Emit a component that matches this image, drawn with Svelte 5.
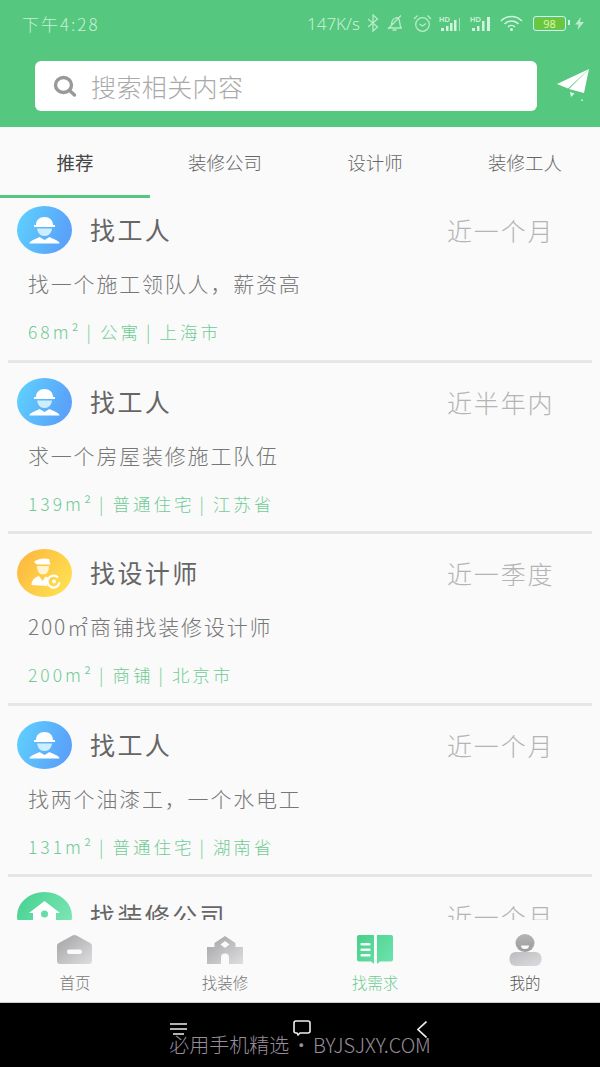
<script>
  const tabs = ['推荐', '装修公司', '设计师', '装修工人'];
  const items = [
    { kind: 'worker', title: '找工人', when: '近一个月', desc: '找一个施工领队人，薪资高', area: '68m²', type: '公寓', place: '上海市' },
    { kind: 'worker', title: '找工人', when: '近半年内', desc: '求一个房屋装修施工队伍', area: '139m²', type: '普通住宅', place: '江苏省' },
    { kind: 'designer', title: '找设计师', when: '近一季度', desc: '200㎡商铺找装修设计师', area: '200m²', type: '商铺', place: '北京市' },
    { kind: 'worker', title: '找工人', when: '近一个月', desc: '找两个油漆工，一个水电工', area: '131m²', type: '普通住宅', place: '湖南省' },
    { kind: 'company', title: '找装修公司', when: '近一个月', desc: '', area: '', type: '', place: '' }
  ];
  const nav = [
    { icon: 'home', label: '首页' },
    { icon: 'shop', label: '找装修' },
    { icon: 'book', label: '找需求', active: true },
    { icon: 'me', label: '我的', dark: true }
  ];
</script>

<div class="page">
  <svg class="defs" width="0" height="0" aria-hidden="true">
    <defs>
      <linearGradient id="gBlue" x1="0" y1="0" x2="1" y2="0.3"><stop offset="0" stop-color="#5fd3fd"/><stop offset="1" stop-color="#5aa2fa"/></linearGradient>
      <linearGradient id="gOrange" x1="0" y1="0" x2="1" y2="0.6"><stop offset="0" stop-color="#fdb43c"/><stop offset="1" stop-color="#fede50"/></linearGradient>
      <linearGradient id="gGreen" x1="0" y1="0" x2="1" y2="0.6"><stop offset="0" stop-color="#45d08f"/><stop offset="1" stop-color="#7ce6b4"/></linearGradient>
      <linearGradient id="gBook" x1="0" y1="0" x2="38" y2="30" gradientUnits="userSpaceOnUse"><stop offset="0" stop-color="#45d088"/><stop offset="1" stop-color="#6fe4ae"/></linearGradient>
      <linearGradient id="gGrey" x1="0" y1="0" x2="1" y2="1"><stop offset="0" stop-color="#a2a2a4"/><stop offset="1" stop-color="#dedee2"/></linearGradient>
      <linearGradient id="gBody" x1="0" y1="0" x2="1" y2="1"><stop offset="0" stop-color="#bcbcbe"/><stop offset="1" stop-color="#dcdce0"/></linearGradient>
      <linearGradient id="gFace" x1="0" y1="0" x2="0" y2="1"><stop offset="0" stop-color="#b4b4b4"/><stop offset="1" stop-color="#9c9c9c"/></linearGradient>
    </defs>
  </svg>

  <header class="header">
    <div class="status">
      <span class="time">下午4:28</span>
      <div class="status-right">
        <span class="speed">147K/s</span>
        <svg class="st" width="12" height="18" viewBox="0 0 12 18" fill="none" stroke="#b9ecc9" stroke-width="1.300"><path d="M1 5l9.500 8-4.500 4V1l4.500 4L1 13"/></svg>
        <svg class="st bell" width="18" height="18" viewBox="0 0 18 18" fill="none" stroke="#b9ecc9" stroke-width="1.300"><path d="M2 14h14M4 14c2-2 1-5 2.500-7.500C8 4 11 3 12.500 4.500 14 6 13.500 11 15 14M6.500 16h4M2 15L15 1.500"/></svg>
        <svg class="st" width="19" height="19" viewBox="0 0 19 19" fill="none" stroke="#b9ecc9" stroke-width="1.300"><circle cx="9.500" cy="10.500" r="6.800"/><path d="M6.500 10l3 2 3.500-2.500M1 5l3.500-3.500M18 5l-3.500-3.500"/></svg>
        <svg class="st hd1" width="22" height="17" viewBox="0 0 22 17"><text x="0" y="6.500" font-size="7.500" font-family="Liberation Sans" font-weight="700" fill="#c8f0d4">HD</text><g fill="#d4f4de"><rect x="2" y="13" width="3" height="3"/><rect x="7" y="11" width="2.500" height="5"/><rect x="11" y="8" width="2.500" height="8"/><rect x="15" y="5" width="2.500" height="11"/></g><rect x="20" y="3" width="1" height="13" fill="#a6e5bb"/></svg>
        <svg class="st" width="23" height="17" viewBox="0 0 23 17"><text x="0" y="6.500" font-size="7.500" font-family="Liberation Sans" font-weight="700" fill="#c8f0d4">HD</text><g fill="#d4f4de"><rect x="2" y="13" width="3" height="3"/><rect x="7" y="11" width="2.500" height="5"/><rect x="12" y="6" width="2.500" height="10"/><rect x="17" y="2" width="3" height="14"/></g></svg>
        <svg class="st" width="24" height="17" viewBox="0 0 24 17" fill="none" stroke="#d4f4de" stroke-width="1.500"><path d="M1 6c6-6 15-6 21 0M4.500 9c4-4 10-4 14 0M8 12c2-2 5-2 7 0"/><circle cx="11.500" cy="14.500" r="1.500" fill="#d4f4de" stroke="none"/></svg>
        <span class="battery"><span class="level">98</span></span>
        <svg class="st bolt" width="9" height="13" viewBox="0 0 9 13"><path d="M6 0L0 7.500h3.500L2.500 13 9 5H5z" fill="#b9ecc9"/></svg>
      </div>
    </div>
    <div class="search-row">
      <div class="search">
        <svg width="24" height="24" viewBox="0 0 24 24" fill="none" stroke="#999" stroke-width="3.400"><ellipse cx="10.500" cy="11" rx="8" ry="7.500"/><path d="M16.500 16.500l5 4.500" stroke-linecap="round"/></svg>
        <span>搜索相关内容</span>
      </div>
      <svg class="send" width="34" height="34" viewBox="0 0 34 34" fill="#fff">
        <path d="M32 1L0 16l11 4.500z"/>
        <path d="M32 1L12 21l15 4z"/>
        <path d="M13 24l4.500 1.500-3.500 3.500z" fill="#e6f8ec"/>
        <rect x="24" y="31.500" width="2" height="1.500" fill="#bfeccf"/>
      </svg>
    </div>
  </header>

  <nav class="tabs">
    {#each tabs as tab, i}
      <div class="tab" class:on={i === 0}>{tab}</div>
    {/each}
  </nav>

  <main class="list">
    {#each items as it}
      <article class="item">
        <div class="head">
          <svg class="avatar" width="55" height="48" viewBox="0 0 55 48">
            {#if it.kind === 'worker'}
              <ellipse cx="27.500" cy="24" rx="27.500" ry="24" fill="url(#gBlue)"/>
              <path d="M19 19c0-5 3.500-8 8.500-8s8.500 3 8.500 8h2v2H17v-2z" fill="#fff"/>
              <path d="M20 22.500h15c-.5 4-3 7.500-7.500 7.500s-7-3.500-7.500-7.500z" fill="#cdeeff"/>
              <path d="M12.500 37.500c0-3 5-3.500 10-6.500l5 3 5-3c5 3 10 3.500 10 6.500z" fill="#fff"/>
            {:else if it.kind === 'designer'}
              <ellipse cx="27.500" cy="24" rx="27.500" ry="24" fill="url(#gOrange)"/>
              <path d="M17 13c3-3 9-4.500 15-3l1.500 5.500H20z" fill="#fff"/>
              <path d="M20 17h12c0 5-2 8.500-6 8.500S20 22 20 17z" fill="#fff3d0"/>
              <path d="M14.500 36c0-5 3.500-8 7.500-9l3.500 5 3-4.500 4.500 2c-2.500 2-3.500 4.500-2.500 7.500z" fill="#fff"/>
              <path d="M41 28.500a6 6 0 1 0 1.500 5" fill="none" stroke="#fff" stroke-width="2.200"/>
              <circle cx="37" cy="32.500" r="2" fill="#fff"/>
            {:else}
              <ellipse cx="27.500" cy="24" rx="27.500" ry="24" fill="url(#gGreen)"/>
              <path d="M27.500 9L43 21h-4v16H16V21h-4z" fill="#fff"/>
              <circle cx="27.500" cy="22" r="3.500" fill="#66dca6"/>
            {/if}
          </svg>
          <h2>{it.title}</h2>
          <span class="when">{it.when}</span>
        </div>
        <p class="desc">{it.desc}</p>
        <p class="tags">{it.area}<i>|</i>{it.type}<i>|</i>{it.place}</p>
      </article>
    {/each}
  </main>

  <footer class="nav">
    {#each nav as n}
      <div class="nav-item" class:active={n.active} class:dark={n.dark}>
        <svg width="38" height="32" viewBox="0 0 38 32">
          {#if n.icon === 'home'}
            <path d="M1 11.500q0-1.500 1.500-2.300L16.500 1.500q2-1 4 0L34.500 9.200q1.500.8 1.500 2.300V27a3 3 0 0 1-3 3H4a3 3 0 0 1-3-3z" fill="url(#gGrey)"/>
            <rect x="11" y="15.500" width="15" height="4.500" rx="2" fill="#fafafa"/>
          {:else if n.icon === 'shop'}
            <path d="M1 13h7.500V9L19 2l10.500 7v4H37v17H1z" fill="url(#gGrey)"/>
            <path d="M19 7l4.500 3.500L19 14l-4.500-3.500z" fill="#fafafa"/>
            <path d="M15 30v-6.500a4 4 0 0 1 8 0V30z" fill="#fafafa"/>
          {:else if n.icon === 'book'}
            <path d="M3 1h15v29l-3-2.500H3a2 2 0 0 1-2-2V3a2 2 0 0 1 2-2z" fill="url(#gBook)"/>
            <path d="M21 1h14a2 2 0 0 1 2 2v22.500a2 2 0 0 1-2 2H24L21 30z" fill="url(#gBook)"/>
            <rect x="4.500" y="9" width="10" height="2.500" rx=".8" fill="#fafafa"/><rect x="4.500" y="14.500" width="10" height="2.500" rx=".8" fill="#fafafa"/><rect x="4.500" y="20" width="10" height="2.500" rx=".8" fill="#fafafa"/>
          {:else}
            <ellipse cx="19" cy="9" rx="9.500" ry="9" fill="url(#gFace)"/>
            <path d="M15 11.500a4 3.500 0 0 0 8 0z" fill="#fafafa"/>
            <rect x="3.500" y="18" width="32" height="14" rx="6" fill="url(#gBody)"/>
          {/if}
        </svg>
        <span>{n.label}</span>
      </div>
    {/each}
  </footer>

  <div class="sysbar">
    <svg width="17" height="14" viewBox="0 0 17 14" stroke="#eee" stroke-width="1.600"><path d="M0 2h17M0 7h17M3 12h11"/></svg>
    <svg width="18" height="18" viewBox="0 0 18 18" fill="none" stroke="#eee" stroke-width="1.600"><path d="M3 1h12a2 2 0 0 1 2 2v8a2 2 0 0 1-2 2H7l-2 2-1-2H3a2 2 0 0 1-2-2V3a2 2 0 0 1 2-2z"/></svg>
    <svg width="10" height="17" viewBox="0 0 10 17" fill="none" stroke="#eee" stroke-width="1.600"><path d="M9.500 .5L1 8.500l8.500 8"/></svg>
    <span class="mark">必用手机精选 • <span class="url">BYJSJXY.COM</span></span>
  </div>
</div>

<style>
  :global(body) {
    margin: 0;
    background: #fafafa;
  }
  .page {
    position: relative;
    width: 600px;
    height: 1067px;
    display: flex;
    flex-direction: column;
    overflow: hidden;
    font-family: "Noto Sans CJK SC", "Noto Sans", sans-serif;
    background: #fafafa;
  }
  .defs { position: absolute; }
  h2, p { margin: 0; font-weight: 400; }

  .header {
    height: 127px;
    flex: none;
    background: #55c77f;
    display: flex;
    flex-direction: column;
  }
  .status {
    height: 46px;
    padding: 0 16px 0 22px;
    display: flex;
    align-items: center;
    justify-content: space-between;
    color: #c6f0d4;
  }
  .time { font-size: 17px; letter-spacing: 2px; font-weight: 300; }
  .status-right { display: flex; align-items: center; gap: 7px; }
  .speed { font-size: 17px; font-family: "Noto Sans", sans-serif; font-weight: 300; }
  .st { flex: none; }
  .bell { margin-right: 2px; }
  .hd1 { margin-right: 2px; }
  .battery {
    position: relative;
    width: 29px;
    height: 11px;
    margin-left: 2px;
    margin-right: 2px;
    border: 1.500px solid #d4f4de;
    border-radius: 3px;
    padding: 1px;
    display: flex;
  }
  .battery::after {
    content: "";
    position: absolute;
    right: -5px;
    top: 3px;
    width: 2px;
    height: 5px;
    background: #d4f4de;
  }
  .level {
    flex: 1;
    background: #6bc63c;
    color: #dcf5a8;
    font-size: 11px;
    line-height: 11px;
    text-align: center;
    font-family: "Noto Sans", sans-serif;
  }
  .search-row {
    margin-top: 15px;
    padding-left: 35px;
    display: flex;
    align-items: flex-start;
  }
  .search {
    width: 502px;
    height: 50px;
    box-sizing: border-box;
    padding-left: 18px;
    background: #fff;
    border-radius: 6px;
    display: flex;
    align-items: center;
    gap: 14px;
    color: #a9a9a9;
    font-size: 25px;
    font-weight: 300;
    letter-spacing: .4px;
  }
  .send { margin: 7px 0 0 20px; }

  .tabs {
    height: 71px;
    flex: none;
    display: flex;
    background: #fafafa;
  }
  .tab {
    width: 150px;
    box-sizing: border-box;
    padding-top: 22px;
    text-align: center;
    font-size: 18.500px;
    line-height: 26px;
    font-weight: 300;
    color: #666;
  }
  .tab.on {
    color: #444;
    font-weight: 400;
    border-bottom: 3px solid #55c77f;
  }

  .list {
    height: 722px;
    flex: none;
    overflow: hidden;
    padding: 8px 8px 0;
    box-sizing: border-box;
  }
  .item {
    height: 156.500px;
    margin-bottom: 15px;
    box-sizing: border-box;
    border-bottom: 3px solid #e6e6e6;
  }
  .head {
    height: 48px;
    padding: 0 9px;
    display: flex;
    align-items: center;
  }
  .avatar { flex: none; margin-right: 18px; }
  h2 {
    flex: 1;
    padding-bottom: 2px;
    font-size: 25px;
    letter-spacing: 2.400px;
    color: #666;
  }
  .when {
    font-size: 25px;
    font-weight: 300;
    letter-spacing: 1.900px;
    color: #b4b4b4;
    margin-right: 28.500px;
  }
  .desc {
    margin: 14px 0 0 20px;
    height: 30px;
    font-size: 21px;
    line-height: 30px;
    letter-spacing: 1.800px;
    font-weight: 300;
    color: #777;
  }
  .tags {
    margin: 21px 0 0 20px;
    font-size: 17.500px;
    line-height: 26px;
    letter-spacing: 3px;
    font-weight: 300;
    color: #6fcb95;
  }
  .tags i {
    font-style: normal;
    margin: 0 9px 0 5px;
    letter-spacing: 0;
  }

  .nav {
    height: 83px;
    flex: none;
    display: flex;
    background: #fafafa;
    border-bottom: 1px solid #ccc;
    box-sizing: border-box;
  }
  .nav-item {
    width: 150px;
    padding-top: 14px;
    box-sizing: border-box;
    display: flex;
    flex-direction: column;
    align-items: center;
    gap: 5px;
    font-size: 15.500px;
    line-height: 22px;
    font-weight: 300;
    color: #777;
  }
  .nav-item.active { color: #6fcb95; }
  .nav-item.dark { color: #555; }

  .sysbar {
    position: relative;
    flex: 1;
    background: #000;
    display: flex;
    align-items: center;
    padding: 0 0 12px 170px;
    gap: 106px;
  }
  .mark {
    position: absolute;
    left: 0;
    right: 0;
    top: 29px;
    text-align: center;
    font-size: 20px;
    line-height: 26px;
    font-weight: 300;
    word-spacing: -2.500px;
    color: #9a8d9a;
  }
  .url { letter-spacing: -.1px; }
</style>
